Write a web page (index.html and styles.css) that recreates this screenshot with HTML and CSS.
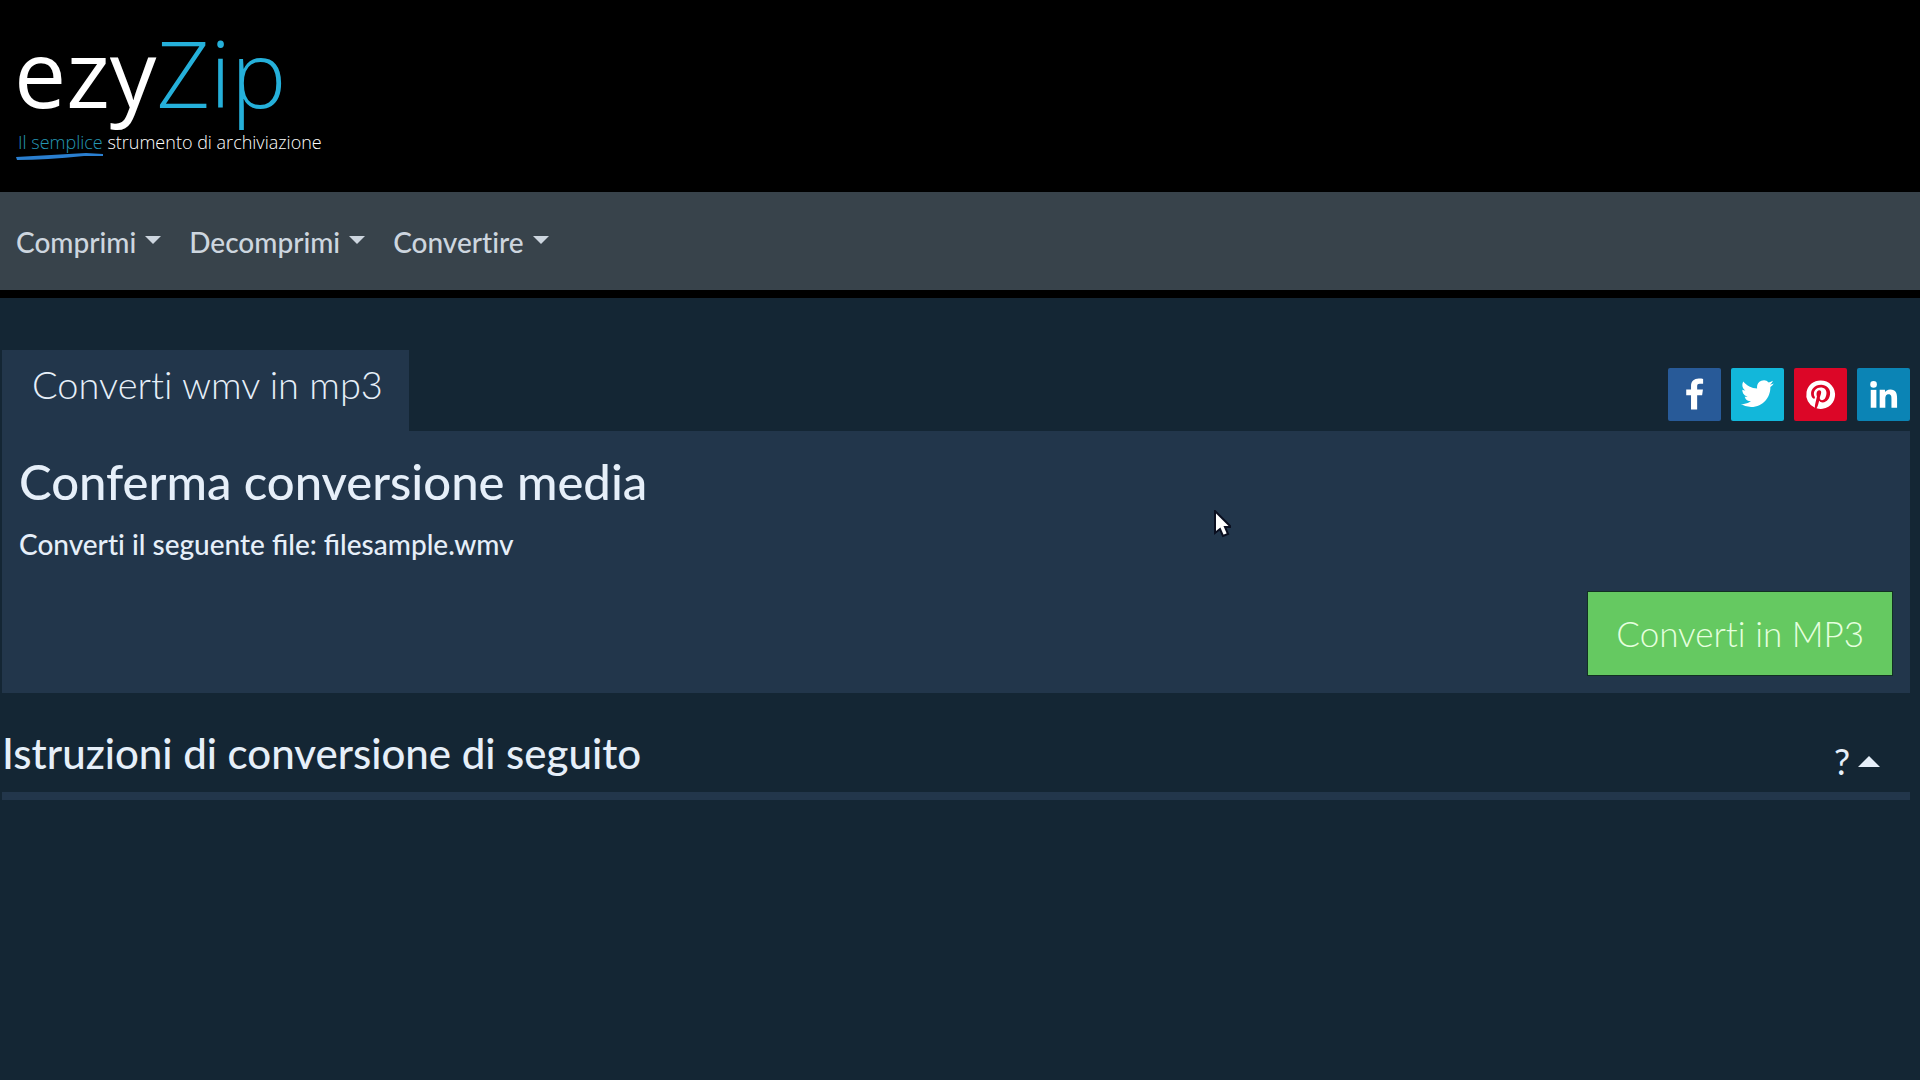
FILE: index.html
```html
<!DOCTYPE html>
<html lang="it">
<head>
<meta charset="utf-8">
<meta name="viewport" content="width=device-width, initial-scale=1">
<title>ezyZip - Converti wmv in mp3</title>
<link rel="stylesheet" href="styles.css">
</head>
<body>
<header class="site-header">
  <a class="logo" href="#">
    <span class="logo-name">ezy<span class="logo-zip">Zip</span></span>
    <span class="tagline"><span class="tagline-accent">Il semplice<svg class="swoosh" viewBox="0 0 88 8" preserveAspectRatio="none" aria-hidden="true"><path d="M0 5 L70 1 L87 2 L87 4 L68 4 Q30 8 1 8 Z" fill="#2a7fd0"/></svg></span> strumento di archiviazione</span>
  </a>
</header>
<nav class="navbar">
  <button class="nav-item" type="button">Comprimi</button>
  <button class="nav-item" type="button">Decomprimi</button>
  <button class="nav-item" type="button">Convertire</button>
</nav>
<main class="content">
  <div class="tab-row">
    <h1 class="tab">Converti wmv in mp3</h1>
    <div class="share">
      <a class="share-link facebook" href="#" aria-label="Facebook"><svg viewBox="0 0 32 32"><path fill="#fff" d="M17.600 25V16.500h3l.5-3.500h-3.500v-2c0-1 .4-1.500 1.600-1.500h2V6.600c-.5-.1-1.500-.2-2.600-.2-2.900 0-4.700 1.700-4.700 4.500V13h-2.900v3.500h2.900V25z"/></svg></a>
      <a class="share-link twitter" href="#" aria-label="Twitter"><svg viewBox="0 0 32 32"><path transform="translate(2.600 2.200) scale(.83)" fill="#fff" d="M28 8.600a9.900 9.900 0 0 1-2.800.8 5 5 0 0 0 2.200-2.700c-1 .5-2 1-3.100 1.200a4.900 4.900 0 0 0-8.500 3.300c0 .4 0 .8.100 1.100-4-.2-7.700-2.100-10.100-5.100a5 5 0 0 0-.7 2.500c0 1.700.9 3.200 2.200 4.100a4.900 4.900 0 0 1-2.200-.6v.1c0 2.400 1.700 4.400 3.900 4.800a4.900 4.900 0 0 1-2.200.1 4.900 4.900 0 0 0 4.600 3.400A9.900 9.900 0 0 1 4 23.600a13.900 13.900 0 0 0 7.500 2.200c9.100 0 14-7.500 14-14v-.6A10 10 0 0 0 28 8.600z"/></svg></a>
      <a class="share-link pinterest" href="#" aria-label="Pinterest"><svg viewBox="0 0 32 32"><path fill="#fff" d="M16 7.500a8.600 8.600 0 0 0-3.400 16.500c0-.7 0-1.500.2-2.200l1.100-4.700s-.3-.6-.3-1.400c0-1.300.7-2.200 1.700-2.200.8 0 1.100.6 1.100 1.300 0 .8-.5 1.900-.8 3-.2.9.5 1.600 1.300 1.600 1.600 0 2.700-2.100 2.700-4.500 0-1.900-1.300-3.200-3.500-3.200-2.600 0-4.100 1.900-4.100 4 0 .7.200 1.200.5 1.600.2.200.2.3.100.5l-.2.600c0 .2-.2.300-.4.200-1.200-.5-1.700-1.800-1.700-3.200 0-2.400 2-5.300 6.100-5.300 3.200 0 5.400 2.300 5.400 4.900 0 3.300-1.800 5.800-4.500 5.800-.9 0-1.800-.5-2.100-1l-.6 2.300c-.2.800-.6 1.500-1 2.200A8.600 8.600 0 1 0 16 7.500z"/></svg></a>
      <a class="share-link linkedin" href="#" aria-label="LinkedIn"><svg viewBox="0 0 32 32"><g fill="#fff"><path d="M8.300 13.200h3.400v10.800H8.300z"/><circle cx="10" cy="9.900" r="2"/><path d="M13.700 13.200h3.200v1.500c.4-.8 1.500-1.700 3.200-1.700 3.400 0 4.100 2.200 4.100 5.200v5.800h-3.400v-5.200c0-1.300 0-2.900-1.700-2.900s-2 1.400-2 2.800v5.300h-3.400z"/></g></svg></a>
    </div>
  </div>
  <section class="panel">
    <h2 class="panel-title">Conferma conversione media</h2>
    <p class="panel-text">Converti il seguente <span class="file-name">file: filesample.wmv</span></p>
    <button class="convert" type="button">Converti in MP3</button>
  </section>
  <section class="instructions">
    <h2 class="instructions-title">Istruzioni di conversione di seguito</h2>
    <button class="toggle" type="button" aria-label="Mostra istruzioni">?</button>
  </section>
</main>
<svg class="cursor" viewBox="0 0 18 28" aria-hidden="true"><path d="M2 1v22l5-4 3 7 5-2-3-7h6z" fill="#fff" stroke="#0a0f20" stroke-width="2"/></svg>
</body>
</html>
```
FILE: styles.css
```css
* { box-sizing: border-box; }
body { margin: 0; min-height: 100vh; background: #142634; color: #e6eff9; font-family: Lato, sans-serif; font-variant-ligatures: none; }
h1, h2, p { margin: 0; }
button { border: 0; margin: 0; background: none; color: inherit; font-family: inherit; font-variant-ligatures: inherit; cursor: pointer; }
.site-header { min-height: 192px; padding: 16px 14px; background: #000; display: flex; align-items: flex-start; }
.logo { display: flex; flex-direction: column; color: #fff; text-decoration: none; font-family: "Open Sans", "Noto Sans", sans-serif; white-space: nowrap; }
.logo-name { font-size: 93px; line-height: 112px; }
.logo-zip { color: #25b0da; font-weight: 300; }
.tagline { padding-left: 4px; font-size: 18px; line-height: 28px; font-weight: 300; }
.tagline-accent { position: relative; color: #2596b4; }
.swoosh { position: absolute; left: -2px; top: 22px; width: 88px; height: 8px; }
.navbar { display: flex; gap: 28px; padding: 0 16px; height: 106px; align-items: center; background: #38434b; border-bottom: 8px solid #000; color: #cdd6df; }
.nav-item { display: flex; align-items: center; gap: 9px; padding: 5px 0 4px; font-size: 28px; line-height: 36px; font-weight: 500; }
.nav-item::after { content: ""; border: 8px solid transparent; border-top-color: currentColor; border-bottom: 0; margin-bottom: 4px; }
.content { padding: 52px 10px 0 2px; }
.tab-row { display: flex; justify-content: space-between; align-items: flex-end; }
.tab { padding: 12px 26px 25px 30px; background: #22364b; font-size: 38px; line-height: 44px; font-weight: 300; }
.share { display: flex; gap: 10px; padding-bottom: 10px; }
.share-link { display: block; width: 53px; height: 53px; border-radius: 2px; }
.share-link svg { display: block; width: 100%; height: 100%; }
.facebook { background: #285a98; }
.twitter { background: #12b7da; }
.pinterest { background: #dc0627; }
.linkedin { background: #0b84b5; }
.panel { display: flex; flex-direction: column; align-items: flex-start; padding: 18px 18px 18px 17px; background: #22364b; }
.panel-title { font-size: 49px; line-height: 64px; font-weight: 500; }
.panel-text { margin-top: 15px; font-size: 28px; line-height: 32px; font-weight: 500; }
.file-name { font-variant-ligatures: normal; }
.convert { align-self: flex-end; margin-top: 32px; padding: 18px 28px; background: #65c961; color: #e5ffdf; font-size: 35px; line-height: 47px; font-weight: 300; box-shadow: 0 0 0 1px #123023; }
.instructions { display: flex; justify-content: space-between; align-items: center; margin-top: 28px; padding: 0 30px 7px 0; border-bottom: 8px solid #22364b; }
.instructions-title { font-size: 42px; line-height: 64px; font-weight: 500; }
.toggle { display: flex; align-items: center; gap: 8px; padding: 16px 0 0; font-size: 36px; line-height: 44px; font-weight: 400; }
.toggle::after { content: ""; border: 11px solid transparent; border-bottom-color: currentColor; border-top: 0; }
.cursor { position: absolute; left: 1213px; top: 510px; width: 18px; height: 28px; }
```
